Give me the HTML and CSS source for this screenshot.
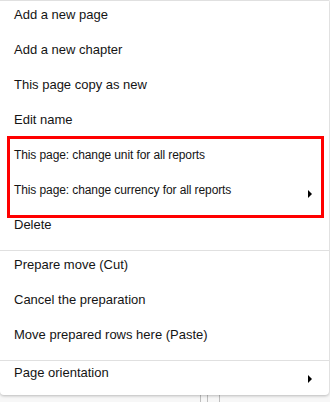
FILE: index.html
```html
<!DOCTYPE html>
<html lang="en">
<head>
    <meta charset="UTF-8">
    <meta name="viewport" content="width=device-width, initial-scale=1.0">
    <title>Page menu</title>
    <link rel="stylesheet" href="styles.css">
</head>
<body>
    <!-- page behind the menu -->
    <div class="backdrop">
        <span class="grid-line"></span>
        <span class="grid-line"></span>
        <span class="grid-line"></span>
    </div>

    <!-- context menu -->
    <div class="menu">
        <div class="item">Add a new page</div>
        <div class="item">Add a new chapter</div>
        <div class="item">This page copy as new</div>
        <div class="item">Edit name</div>
        <div class="item narrow">This page: change unit for all reports</div>
        <div class="item narrow has-sub">This page: change currency for all reports</div>
        <div class="item">Delete</div>
        <div class="separator"></div>
        <div class="item">Prepare move (Cut)</div>
        <div class="item">Cancel the preparation</div>
        <div class="item">Move prepared rows here (Paste)</div>
        <div class="separator"></div>
        <div class="item has-sub last">Page orientation</div>

        <!-- highlight marker -->
        <div class="highlight"></div>
    </div>
</body>
</html>
```

FILE: styles.css
```css
body {
    margin: 0;
    background-color: rgb(247, 247, 247);
    font-family: "Liberation Sans", Arial, sans-serif;
    font-size: 13px;
    color: rgb(20, 20, 20);
    height: 402px;
    overflow: hidden;
    position: relative;
}
.backdrop {
    position: absolute;
    left: 0;
    right: 0;
    top: 390px;
    height: 12px;
    display: flex;
    padding-left: 200px;
    gap: 6px;
}
.grid-line {
    width: 1px;
    background-color: rgb(190, 190, 190);
}
.grid-line:last-child {
    margin-left: 5px;
}
.menu {
    position: relative;
    width: 329px;
    background-color: rgb(255, 255, 255);
    border-top: 1px solid rgb(224, 224, 224);
    border-radius: 0 0 4px 4px;
    box-shadow: 0 1px 3px rgba(0, 0, 0, 0.25);
    height: 395px;
    box-sizing: border-box;
}
.item {
    height: 35px;
    box-sizing: border-box;
    padding: 5px 14px 0 14px;
    line-height: 18px;
    white-space: nowrap;
    position: relative;
}
.narrow {
    font-size: 12px;
    letter-spacing: -0.1px;
}
.has-sub::after {
    content: "";
    position: absolute;
    left: 308px;
    top: 14px;
    border-left: 4px solid rgb(0, 0, 0);
    border-top: 4px solid transparent;
    border-bottom: 4px solid transparent;
}
.separator {
    height: 1px;
    margin-top: 4px;
    background-color: rgb(224, 224, 224);
}
.last {
    padding-top: 3px;
}
.highlight {
    position: absolute;
    left: 7px;
    top: 135px;
    width: 317px;
    height: 82px;
    box-sizing: border-box;
    border: 3px solid rgb(255, 0, 0);
}
```
